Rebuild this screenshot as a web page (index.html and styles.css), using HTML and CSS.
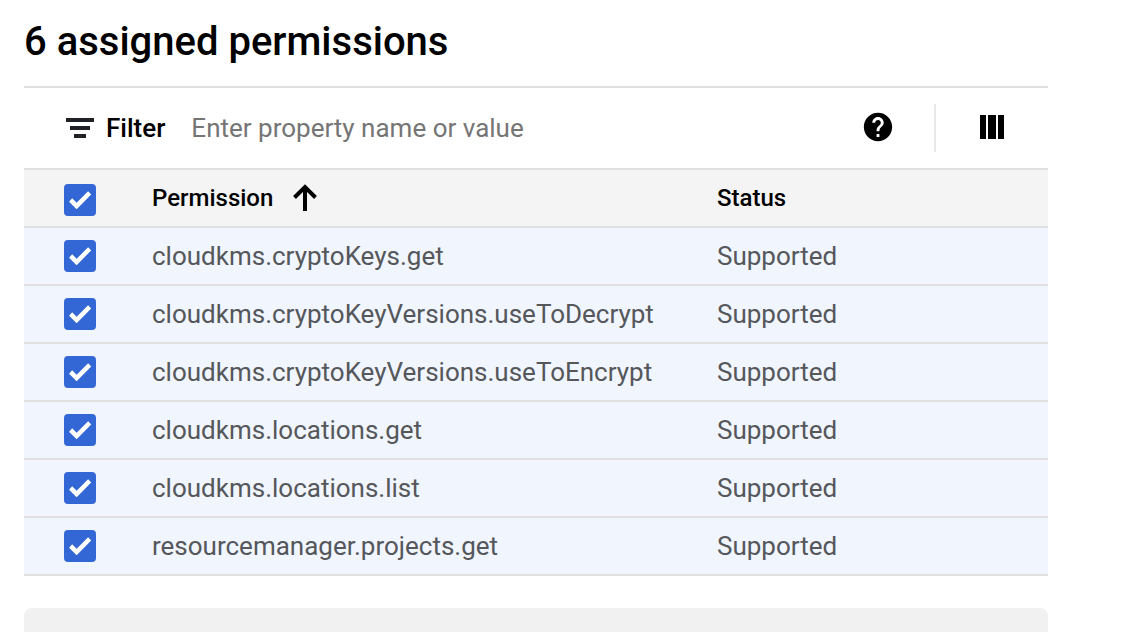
FILE: index.html
```html
<!DOCTYPE html>
<html lang="en">
<head>
<meta charset="utf-8">
<title>Assigned permissions</title>
<link rel="stylesheet" href="styles.css">
</head>
<body>
<main class="page">
  <h1 class="title">6 assigned permissions</h1>
  <div class="toolbar">
    <label class="filter-label" for="filter">
      <svg class="filter-icon" width="28" height="20" viewBox="0 0 28 20" aria-hidden="true"><path fill="#202124" d="M0 0h28v4H0zM4 8h20v4H4zM8 16h12v4H8z"/></svg>
      Filter
    </label>
    <input class="filter-input" id="filter" type="text" placeholder="Enter property name or value">
    <button class="icon-button" type="button" aria-label="Help">
      <svg width="34" height="34" viewBox="0 0 24 24" aria-hidden="true"><path d="M12 2C6.480 2 2 6.480 2 12s4.480 10 10 10 10-4.480 10-10S17.520 2 12 2zm1 17h-2v-2h2v2zm2.070-7.750l-.9.920C13.450 12.900 13 13.500 13 15h-2v-.5c0-1.100.45-2.100 1.170-2.830l1.240-1.260c.37-.36.59-.86.59-1.410 0-1.100-.9-2-2-2s-2 .9-2 2H8c0-2.210 1.790-4 4-4s4 1.790 4 4c0 .88-.36 1.680-.93 2.250z"/></svg>
    </button>
    <span class="divider"></span>
    <button class="icon-button" type="button" aria-label="Column display options">
      <svg width="24" height="24" viewBox="0 0 24 24" aria-hidden="true"><path d="M0 0h6v24H0zM8 0h8v24H8zM18 0h6v24h-6z"/></svg>
    </button>
  </div>
  <table class="permissions">
    <colgroup><col class="col-check"><col class="col-name"><col></colgroup>
    <thead>
      <tr>
        <th class="check-cell" scope="col"><input class="check" type="checkbox" checked aria-label="Select all"></th>
        <th scope="col"><button class="sort" type="button">Permission
          <svg width="24" height="28" viewBox="0 0 24 28" aria-hidden="true"><path fill="none" stroke="#000" stroke-width="4" d="M12 27V3M1.500 13.500L12 3l10.500 10.500"/></svg></button></th>
        <th scope="col">Status</th>
      </tr>
    </thead>
    <tbody>
      <tr><td class="check-cell"><input class="check" id="p1" type="checkbox" checked></td><td><label for="p1">cloudkms.cryptoKeys.get</label></td><td>Supported</td></tr>
      <tr><td class="check-cell"><input class="check" id="p2" type="checkbox" checked></td><td><label for="p2">cloudkms.cryptoKeyVersions.useToDecrypt</label></td><td>Supported</td></tr>
      <tr><td class="check-cell"><input class="check" id="p3" type="checkbox" checked></td><td><label for="p3">cloudkms.cryptoKeyVersions.useToEncrypt</label></td><td>Supported</td></tr>
      <tr><td class="check-cell"><input class="check" id="p4" type="checkbox" checked></td><td><label for="p4">cloudkms.locations.get</label></td><td>Supported</td></tr>
      <tr><td class="check-cell"><input class="check" id="p5" type="checkbox" checked></td><td><label for="p5">cloudkms.locations.list</label></td><td>Supported</td></tr>
      <tr><td class="check-cell"><input class="check" id="p6" type="checkbox" checked></td><td><label for="p6">resourcemanager.projects.get</label></td><td>Supported</td></tr>
    </tbody>
  </table>
  <section class="panel"></section>
</main>
</body>
</html>
```

FILE: styles.css
```css
* { box-sizing: border-box; }

body {
  margin: 0;
  background: #fff;
  color: #000;
  font-family: Roboto, sans-serif;
  font-size: 26px;
  line-height: 32px;
}

button, input { font: inherit; color: inherit; }

button {
  padding: 0;
  border: 0;
  background: none;
}

svg { display: block; }

.page {
  display: flex;
  flex-direction: column;
  min-height: 100vh;
  padding: 16px 94px 0 24px;
}

.title {
  margin: 0 0 18px;
  font-size: 40px;
  font-weight: 500;
  line-height: 52px;
}

.toolbar {
  display: flex;
  align-items: center;
  height: 84px;
  padding: 0 44px 0 42px;
  border-top: 2px solid #e0e0e0;
  border-bottom: 2px solid #e0e0e0;
}

.filter-label {
  display: flex;
  align-items: center;
  gap: 12px;
  font-weight: 500;
}

.filter-input {
  flex: 1;
  min-width: 0;
  margin-left: 24px;
  padding: 0 2px;
  border: 0;
  outline: 0;
  background: none;
}

.filter-input::placeholder { color: #757575; opacity: 1; }

.icon-button { padding-bottom: 2px; }

.divider {
  width: 2px;
  height: 48px;
  margin: 0 44px 0 39px;
  background: #e8e8e8;
}

.permissions {
  width: 100%;
  table-layout: fixed;
  border-spacing: 0;
}

.col-check { width: 128px; }
.col-name { width: 565px; }

th, td {
  height: 58px;
  padding: 0;
  border-bottom: 2px solid #e0e0e0;
  text-align: left;
  vertical-align: middle;
}

th {
  background: #f4f4f4;
  font-size: 24px;
  font-weight: 500;
}

td {
  background: #f0f5fe;
  color: #55575b;
}

.check-cell { padding-left: 40px; }
th.check-cell { padding-top: 4px; }

.sort {
  display: flex;
  align-items: center;
  gap: 20px;
}

.check {
  display: block;
  width: 32px;
  height: 32px;
  margin: 0;
  border: 2px solid #3367d6;
  border-radius: 4px;
  appearance: none;
}

.check:checked { background: #3367d6; }

.check:checked::before {
  content: "";
  display: block;
  width: 28px;
  height: 28px;
  background: #fff;
  clip-path: polygon(11% 56%, 22% 44%, 38% 60%, 79% 19%, 90% 30%, 38% 83%);
}

.panel {
  flex: 1;
  min-height: 24px;
  margin-top: 32px;
  border-radius: 8px 8px 0 0;
  background: #f1f1f1;
}
```
